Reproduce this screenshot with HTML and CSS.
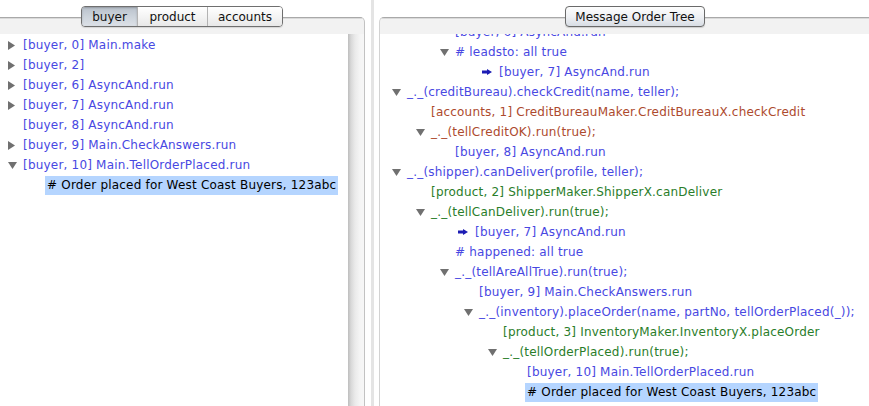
FILE: index.html
```html
<!DOCTYPE html>
<html>
<head>
<meta charset="utf-8">
<link rel="stylesheet" href="styles.css">
</head>
<body>
<svg class="defs" width="0" height="0">
  <defs>
    <polygon id="tr" points="0,0 7,4.5 0,9"/>
    <polygon id="td" points="0,0 9,0 4.5,7"/>
    <polygon id="ar" points="0,1.5 5,1.5 5,0 10,3 5,6 5,4.5 0,4.5"/>
  </defs>
</svg>
<div class="panel left">
  <div class="panel-gap"></div>
  <div class="frame">
    <div class="frame-head">
      <div class="seg">
        <span class="seg-item on w-buyer">buyer</span>
        <span class="seg-item w-product">product</span>
        <span class="seg-item w-accounts">accounts</span>
      </div>
    </div>
    <div class="body">
      <div class="tree tree-left">
        <div class="row l0"><span class="tog"><svg class="tri-r" width="7" height="9"><use href="#tr"/></svg></span><span class="txt blue">[buyer, 0] Main.make</span></div>
        <div class="row l0"><span class="tog"><svg class="tri-r" width="7" height="9"><use href="#tr"/></svg></span><span class="txt blue">[buyer, 2]</span></div>
        <div class="row l0"><span class="tog"><svg class="tri-r" width="7" height="9"><use href="#tr"/></svg></span><span class="txt blue">[buyer, 6] AsyncAnd.run</span></div>
        <div class="row l0"><span class="tog"><svg class="tri-r" width="7" height="9"><use href="#tr"/></svg></span><span class="txt blue">[buyer, 7] AsyncAnd.run</span></div>
        <div class="row l0"><span class="tog"></span><span class="txt blue">[buyer, 8] AsyncAnd.run</span></div>
        <div class="row l0"><span class="tog"><svg class="tri-r" width="7" height="9"><use href="#tr"/></svg></span><span class="txt blue">[buyer, 9] Main.CheckAnswers.run</span></div>
        <div class="row l0"><span class="tog"><svg class="tri-d" width="9" height="7"><use href="#td"/></svg></span><span class="txt blue">[buyer, 10] Main.TellOrderPlaced.run</span></div>
        <div class="row l1"><span class="tog"></span><span class="txt sel"># Order placed for West Coast Buyers, 123abc</span></div>
      </div>
      <div class="scroll-track"></div>
    </div>
  </div>
</div>
<div class="split"><div class="split-line"></div></div>
<div class="panel right">
  <div class="panel-gap"></div>
  <div class="frame">
    <div class="frame-head">
      <div class="title-btn">Message Order Tree</div>
    </div>
    <div class="body">
      <div class="tree tree-right">
        <div class="row l2"><span class="tog"></span><span class="txt blue">[buyer, 6] AsyncAnd.run</span></div>
        <div class="row l2"><span class="tog"><svg class="tri-d" width="9" height="7"><use href="#td"/></svg></span><span class="txt blue"># leadsto: all true</span></div>
        <div class="row l3"><span class="tog"></span><span class="arrow"><svg width="10" height="6"><use href="#ar"/></svg></span><span class="txt blue">[buyer, 7] AsyncAnd.run</span></div>
        <div class="row l0"><span class="tog"><svg class="tri-d" width="9" height="7"><use href="#td"/></svg></span><span class="txt blue">_._(creditBureau).checkCredit(name, teller);</span></div>
        <div class="row l1"><span class="tog"></span><span class="txt red">[accounts, 1] CreditBureauMaker.CreditBureauX.checkCredit</span></div>
        <div class="row l1"><span class="tog"><svg class="tri-d" width="9" height="7"><use href="#td"/></svg></span><span class="txt red">_._(tellCreditOK).run(true);</span></div>
        <div class="row l2"><span class="tog"></span><span class="txt blue">[buyer, 8] AsyncAnd.run</span></div>
        <div class="row l0"><span class="tog"><svg class="tri-d" width="9" height="7"><use href="#td"/></svg></span><span class="txt blue">_._(shipper).canDeliver(profile, teller);</span></div>
        <div class="row l1"><span class="tog"></span><span class="txt green">[product, 2] ShipperMaker.ShipperX.canDeliver</span></div>
        <div class="row l1"><span class="tog"><svg class="tri-d" width="9" height="7"><use href="#td"/></svg></span><span class="txt green">_._(tellCanDeliver).run(true);</span></div>
        <div class="row l2"><span class="tog"></span><span class="arrow"><svg width="10" height="6"><use href="#ar"/></svg></span><span class="txt blue">[buyer, 7] AsyncAnd.run</span></div>
        <div class="row l2"><span class="tog"></span><span class="txt blue"># happened: all true</span></div>
        <div class="row l2"><span class="tog"><svg class="tri-d" width="9" height="7"><use href="#td"/></svg></span><span class="txt blue">_._(tellAreAllTrue).run(true);</span></div>
        <div class="row l3"><span class="tog"></span><span class="txt blue">[buyer, 9] Main.CheckAnswers.run</span></div>
        <div class="row l3"><span class="tog"><svg class="tri-d" width="9" height="7"><use href="#td"/></svg></span><span class="txt blue">_._(inventory).placeOrder(name, partNo, tellOrderPlaced(_));</span></div>
        <div class="row l4"><span class="tog"></span><span class="txt green">[product, 3] InventoryMaker.InventoryX.placeOrder</span></div>
        <div class="row l4"><span class="tog"><svg class="tri-d" width="9" height="7"><use href="#td"/></svg></span><span class="txt green">_._(tellOrderPlaced).run(true);</span></div>
        <div class="row l5"><span class="tog"></span><span class="txt blue">[buyer, 10] Main.TellOrderPlaced.run</span></div>
        <div class="row l5"><span class="tog"></span><span class="txt sel"># Order placed for West Coast Buyers, 123abc</span></div>
      </div>
    </div>
  </div>
</div>
</body>
</html>
```
FILE: styles.css
```css
html, body {
  margin: 0;
  padding: 0;
}
body {
  width: 869px;
  height: 406px;
  overflow: hidden;
  background: #ffffff;
  font-family: "DejaVu Sans", "Verdana", sans-serif;
  font-size: 12px;
  display: flex;
}
.defs {
  position: absolute;
  width: 0;
  height: 0;
}
.panel {
  display: flex;
  flex-direction: column;
  flex: none;
  height: 406px;
}
.left { width: 365px; }
.right { width: 511px; }
.panel-gap {
  height: 17px;
  flex: none;
}
.frame {
  flex: 1;
  min-height: 0;
  display: flex;
  flex-direction: column;
  border-top: 1px solid #a9a9a9;
  background: #f2f2f2;
}
.left .frame {
  border-right: 1px solid #c2c2c2;
  border-top-right-radius: 5px;
}
.right .frame {
  border-left: 1px solid #d2d2d2;
  border-top-left-radius: 5px;
}
.frame-head {
  height: 16px;
  flex: none;
  display: flex;
  justify-content: center;
  box-shadow: inset 0 1px 0 #dadada;
}
.seg {
  display: flex;
  height: 21px;
  margin-top: -12px;
  box-sizing: border-box;
  border: 1px solid #6f6f6f;
  border-radius: 4px;
  overflow: hidden;
  box-shadow: 0 1px 1px rgba(0,0,0,0.12);
  position: relative;
  z-index: 1;
}
.seg-item {
  display: flex;
  align-items: center;
  justify-content: center;
  color: #111;
  background: linear-gradient(#ffffff, #f4f4f4 50%, #e8e8e8);
  border-left: 1px solid #b3b3b3;
}
.seg-item:first-child { border-left: none; }
.seg-item.on {
  background: linear-gradient(#b9c1cb, #ccd3db 50%, #dce1e7);
  box-shadow: inset 0 1px 2px rgba(0,0,0,0.22);
}
.w-buyer { width: 55px; }
.w-product { width: 69px; }
.w-accounts { width: 74px; }
.title-btn {
  height: 21px;
  margin-top: -12px;
  box-sizing: border-box;
  padding: 0 9px;
  border: 1px solid #6a6a6a;
  border-radius: 4px;
  display: flex;
  align-items: center;
  color: #111;
  background: linear-gradient(#fdfdfd, #eff1f4 50%, #d8dde4);
  box-shadow: 0 1px 1px rgba(0,0,0,0.15);
  position: relative;
  z-index: 1;
}
.body {
  flex: 1;
  min-height: 0;
  display: flex;
  background: #ffffff;
  overflow: hidden;
}
.tree {
  flex: 1;
  min-width: 0;
}
.tree-left { --base: 8px; margin-top: 1px; }
.tree-right { --base: 12px; margin-top: -12px; }
.scroll-track {
  width: 16px;
  flex: none;
  background: linear-gradient(to right, #bdbdbd, #d8d8d8 3px, #eaeaea 7px, #f5f5f5 12px, #f7f7f7);
}
.split {
  width: 14px;
  flex: none;
  display: flex;
  padding-left: 6px;
  box-sizing: border-box;
}
.split-line {
  width: 3px;
  background: #e4e4e4;
}
.row {
  height: 20px;
  line-height: 20px;
  display: flex;
  align-items: center;
  white-space: nowrap;
  padding-left: calc(var(--base) + var(--lvl) * 24px);
}
.l0 { --lvl: 0; }
.l1 { --lvl: 1; }
.l2 { --lvl: 2; }
.l3 { --lvl: 3; }
.l4 { --lvl: 4; }
.l5 { --lvl: 5; }
.tog {
  width: 15px;
  flex: none;
  display: flex;
  align-items: center;
}
.tog svg { fill: #707070; display: block; }
.tri-r { margin-top: 1px; }
.tri-d { margin-top: 1px; }
.arrow {
  width: 20px;
  flex: none;
  display: flex;
  align-items: center;
  padding-left: 3px;
  box-sizing: border-box;
}
.arrow svg { fill: #1c1cb4; display: block; }
.txt {
  white-space: pre;
  letter-spacing: 0.2px;
}
.blue { color: #4848e2; }
.red { color: #ad4a2e; }
.green { color: #2a7d2a; }
.sel {
  color: #000;
  background: #b5d5ff;
  margin-left: -2px;
  padding: 0 2px;
  line-height: 19px;
}
```
